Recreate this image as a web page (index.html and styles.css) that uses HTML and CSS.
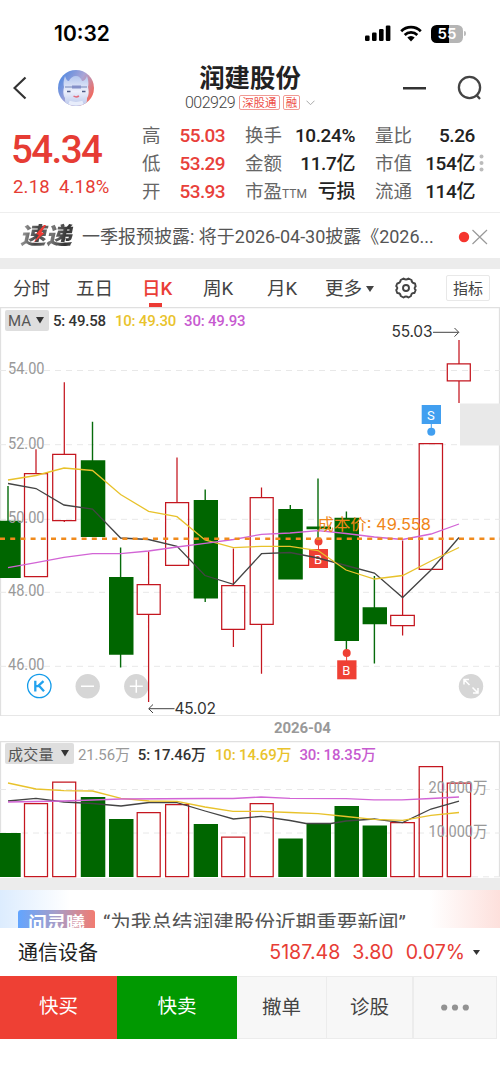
FILE: index.html
```
<!DOCTYPE html>
<html lang="zh-CN">
<head>
<meta charset="utf-8">
<title>润建股份 002929</title>
<link rel="stylesheet" href="styles.css">
</head>
<body>
<main class="app">
  <div class="status">
    <span class="time">10:32</span>
    <svg class="signal" width="26" height="17" viewBox="0 0 26 17"><rect x="0" y="10.5" width="4.6" height="5.5" rx="1.2"/><rect x="7" y="7.5" width="4.6" height="8.5" rx="1.2"/><rect x="14" y="4" width="4.6" height="12" rx="1.2"/><rect x="20.8" y="0.5" width="4.6" height="15.5" rx="1.2"/></svg>
    <svg class="wifi" width="22" height="17" viewBox="0 0 22 17" fill="none" stroke="#000" stroke-width="2.7"><path d="M1.2 6.2a14 14 0 0 1 19.6 0"/><path d="M4.7 10a9 9 0 0 1 12.6 0"/><path d="M7.3 12.6a5.3 5.3 0 0 1 7.4 0L11 16.4z" fill="#000" stroke="none"/></svg>
    <span class="battery"><span class="cell">55</span><i></i></span>
  </div>

  <header class="header">
    <svg class="back" width="14" height="24" viewBox="0 0 14 24" fill="none" stroke="#333" stroke-width="2.2"><path d="M12.5 1.5 1.5 12l11 10.5"/></svg>
    <svg class="avatar" width="38" height="38" viewBox="0 0 38 38">
      <defs>
        <linearGradient id="av" x1="0" y1="0.2" x2="1" y2="0.8"><stop offset="0.1" stop-color="#5d8de0"/><stop offset="0.5" stop-color="#aaa5d6"/><stop offset="0.9" stop-color="#f0695f"/></linearGradient>
        <linearGradient id="face" x1="0" y1="0" x2="0" y2="1"><stop offset="0" stop-color="#b3c6ee"/><stop offset="0.5" stop-color="#eceffb"/><stop offset="1" stop-color="#b5c4ea"/></linearGradient>
        <clipPath id="disc"><circle cx="19" cy="19" r="18"/></clipPath>
      </defs>
      <g clip-path="url(#disc)">
        <rect width="38" height="38" fill="url(#av)"/>
        <path d="M11 38c-3-3-3-6-3-9-2-3-2-7-1-11-1-4 0-8 1-11 1 3 2 5 4 5 1-3 4-5 7-5s5 2 6 5c2 0 4-2 5-5 1 3 2 7 1 11 1 4 1 8-1 11 0 3 0 6-3 9z" fill="url(#face)"/>
        <path d="M8 18h22" stroke="#7485b8" stroke-width="1.200"/>
        <path d="M15 18h9" stroke="#8490c8" stroke-width="3"/>
        <path d="M10 22.500h3.500M25 22.500h3.500" stroke="#4e5b88" stroke-width="1.600"/>
        <path d="M16.500 27q2.700 1.800 5.500 0" stroke="#e26b7c" stroke-width="1.500" fill="none"/>
        <path d="M12 33.500q7 2.500 14 0" stroke="#e8edfb" stroke-width="3.500" fill="none"/>
      </g>
    </svg>
    <div class="stock">
      <h1>润建股份</h1>
      <div class="code"><span class="num">002929</span><b>深股通</b><b>融</b><svg width="9" height="6" viewBox="0 0 9 6" fill="none" stroke="#aaa"><path d="M.5.7l4 4 4-4"/></svg></div>
    </div>
    <svg class="minus" width="23" height="3"><rect width="23" height="2.500" fill="#333"/></svg>
    <svg class="search" width="26" height="26" viewBox="0 0 26 26" fill="none" stroke="#444" stroke-width="2.300"><circle cx="12.500" cy="12.500" r="10.600"/><path d="m19 19.500 4 4.500"/></svg>
  </header>

  <section class="quote">
    <div class="price"><strong>54.34</strong><p><span>2.18</span><span>4.18%</span></p></div>
    <dl>
      <dt>高</dt><dd class="up">55.03</dd><dt>换手</dt><dd>10.24%</dd><dt>量比</dt><dd>5.26</dd>
      <dt>低</dt><dd class="up">53.29</dd><dt>金额</dt><dd>11.7亿</dd><dt>市值</dt><dd>154亿</dd>
      <dt>开</dt><dd class="up">53.93</dd><dt>市盈<small>TTM</small></dt><dd>亏损</dd><dt>流通</dt><dd>114亿</dd>
    </dl>
    <svg class="more" width="5" height="18" fill="#bbb"><circle cx="2.500" cy="2.500" r="2"/><circle cx="2.500" cy="9" r="2"/><circle cx="2.500" cy="15.500" r="2"/></svg>
  </section>

  <section class="news">
    <span class="logo">速递<svg class="bolt" width="10" height="21" viewBox="0 0 10 21"><path d="M7 0 1 10l3 1-4 9 9-11-3-1 3-8z" fill="#f03a33"/></svg></span>
    <span class="headline">一季报预披露: 将于<span class="d">2026-04-30</span>披露《<span class="d">2026...</span></span>
    <svg width="30" height="18" viewBox="0 0 30 18"><circle cx="6" cy="9" r="5.200" fill="#f5352e"/><path d="M14.500 2 29 16M29 2 14.500 16" stroke="#999" stroke-width="1.200"/></svg>
  </section>

  <nav class="tabs">
    <span>分时</span><span>五日</span><span class="on">日K</span><span>周K</span><span>月K</span>
    <span class="drop">更多<svg width="8" height="6"><path d="M0 0h8L4 6z" fill="#444"/></svg></span>
    <svg class="gear" width="22" height="22" viewBox="0 0 22 22" fill="none" stroke="#444" stroke-width="1.900" stroke-linejoin="round"><path d="M8.500 1.500Q11 3.500 13.500 1.500L16.500 3Q16.500 6 20 6.500L20.700 9.500Q18.500 11 20.700 13L19.500 16Q16.300 15.500 16 19L13.500 20.500Q11 18.500 8.500 20.500L5.700 19Q5.500 15.800 2.200 16L1.200 13Q3.500 11 1.200 9.200L2.200 6.500Q5.500 6.200 5.700 3Z"/><circle cx="11" cy="11" r="3"/></svg>
    <button>指标</button>
  </nav>

  <section class="panel kline">
    <svg width="500" height="409" viewBox="0 307 500 409">
      <path class="frame" d="M0 307.700H500M.5 308V716M499.500 308V716M0 715.800H500"/>
      <rect x="460" y="403.500" width="40" height="42" fill="#e9e9e9"/>
      <path class="grid" d="M0 370.500H500M0 444.700H460M0 519.300H500M0 592.300H500M0 666.300H500"/>
      <g class="axis">
        <text x="8" y="374.300" textLength="36.500" lengthAdjust="spacingAndGlyphs">54.00</text><text x="8" y="448.600" textLength="36.500" lengthAdjust="spacingAndGlyphs">52.00</text><text x="8" y="596" textLength="36.500" lengthAdjust="spacingAndGlyphs">48.00</text><text x="8" y="670" textLength="36.500" lengthAdjust="spacingAndGlyphs">46.00</text>
      </g>
      <g class="round"><circle cx="87.700" cy="686.300" r="12.200"/><circle cx="136.300" cy="686.300" r="12.200"/><circle cx="471" cy="686.300" r="12.200"/></g>
      <path d="M81 686.300h13M129.800 686.300h13M136.300 679.800v13M464 684.500v-5h5M464.500 680l5 5M478 688v5h-5M477.500 692.500l-5-5" fill="none" stroke="#fff" stroke-width="1.500"/>
      <circle cx="39.300" cy="686" r="11.700" fill="#fff" stroke="#139bea" stroke-width="1.300"/>
      <path d="M35.300 680.800v10.700M43.500 681.200l-5.500 5h-2.500M39 685.700l5 5.600" stroke="#22a2ee" stroke-width="2.300" fill="none"/>
      <g class="green">
        <path d="M8 486v40M92.500 421.700V465M120.600 547.500v120M205.200 489.500V602M290.300 505v10M318 478.500v62M346.400 511.500V652M374.400 576v87.500"/>
        <path class="body" d="M0 520.700H20.700V578H0zM80.800 460.300h24.500V537H80.800zM109 577h24.500v77.800H109zM193.700 500H218v98.500h-24.300zM278.300 509h24.500v70.500h-24.500zM306.500 526.500H331v2.700h-24.500zM334.500 517.700H359V641h-24.500zM362.600 607.300H387V624.300h-24.400z"/>
      </g>
      <path class="red" d="M36 449.300v24M24.500 473.500h23v103h-23zM64.300 382.300V454M52.700 454.300h23v66.200h-23zM64.300 520.500v1.500M148.600 551.500v33M137.200 584.700h23v29.600h-23zM148.600 614.300V702M177 457.500v45M165.600 502.700h23v62.600h-23zM233.400 548.500v37M221.700 585.700h23v43.600h-23zM233.400 629.300v17.700M261.500 487.500v10M250.200 497.500h23v126.800h-23zM261.500 624.300v49.400M402.600 540.500v74.700M390.700 615.300h23.600v10.300h-23.600zM402.600 625.600v10M419.200 443.600h23.300v125.700h-23.300zM459 340v23.700M447.300 363.900h23v17h-23zM459 381v22"/>
      <text class="axis" x="8" y="522.600" textLength="36.500" lengthAdjust="spacingAndGlyphs">50.00</text>
      <g class="trade"><path d="M318.500 541v9M346.600 652v9"/><circle cx="318.500" cy="541.500" r="4"/><circle cx="346.700" cy="653" r="4"/><rect x="309" y="549" width="19" height="19"/><rect x="337.200" y="660.300" width="19.300" height="19"/><text x="314" y="563.500">B</text><text x="342.200" y="674.800">B</text></g>
      <polyline class="ma5" points="8,483.500 36,488.500 64,505 92.500,509 120.600,538 148.600,539.500 177,546.300 205,575.500 233.400,584.300 261.500,553.700 290,552.500 318,558 346,565.500 374.400,573 402.600,597.500 431,570 459,537.500"/>
      <g class="trade sell"><path d="M431.300 422v9"/><circle cx="431.300" cy="431.700" r="4"/><rect x="421.700" y="405" width="19.300" height="19"/><text x="427" y="419.500">S</text></g>
      <polyline class="ma10" points="8,480 36,475.500 64,468 92.500,470.500 120.600,494.500 148.600,511.300 177,516.700 205,540 233.400,547.700 261.500,546.300 290,546.300 318,550.500 346,570 374.400,579 402.600,575.500 431,561 459,547.500"/>
      <polyline class="ma30" points="8,567.700 36,562.700 64,557.300 92.500,553.700 120.600,553.700 148.600,551 177,547 205,543.300 233.400,539.500 261.500,534.300 290,533 318,530.700 346,533.500 374.400,537 402.600,539.500 431,534 459,524"/>
      <path class="cost" d="M0 538.700H500"/>
      <text class="costlabel" x="317.500" y="530.300" textLength="113.500" lengthAdjust="spacingAndGlyphs">成本价: 49.558</text>
      <g class="peak"><text x="391.500" y="337" textLength="41">55.03</text><text x="174.500" y="713.500" textLength="41.500">45.02</text></g>
      <path d="M433 332.300h25.500M454.500 328l4.300 4.300-4.300 4.300M174.500 708.700H149M153 704.500l-4.300 4.200 4.300 4.300" fill="none" stroke="#444"/>
    </svg>
    <div class="legend"><span class="pick" style="width:44px"><i>MA</i><svg width="8" height="7"><path d="M0 0h8L4 6.500z" fill="#333"/></svg></span><span class="l5">5: 49.58</span><span class="l10">10: 49.30</span><span class="l30">30: 49.93</span></div>
  </section>
  <div class="date">2026-04</div>
  <section class="panel volume">
    <svg width="500" height="137" viewBox="0 741 500 137">
      <path class="frame" d="M0 741.700H500M.5 742V877M499.500 742V877"/>
      <path class="grid" d="M0 789.500H500M0 833H500M472 876.800H500"/>
      <path class="body" fill="#006600" d="M0 833H20.700V877H0zM80.800 797h24.500v80H80.800zM109 819h24.500v58H109zM193.700 824H218v53h-24.300zM278.300 838.500h24.500V877h-24.500zM306.500 823H331v54h-24.500zM334.500 806H359v71h-24.500zM362.600 825.500H387V877h-24.400z"/>
      <path class="red" d="M24.500 803.500h23v73h-23zM52.700 782h23v94.500h-23zM137.200 812.700h23v63.800h-23zM165.600 804.700h23v71.800h-23zM221.700 837h23v39.500h-23zM250.200 803.700h23v72.800h-23zM390.700 822.700h23.600v53.800h-23.600zM419.200 766.500h23.300v110h-23.300zM447.300 783h23.300v93.500h-23.300z"/>
      <polyline class="ma5" points="8,801 36,798.300 64,802 92.500,803.500 121,806 149,802.500 177,802.700 205,811 233.400,819 261.500,816.300 290,820.500 306,823.500 331,823.500 346,821 374,819 402.600,822.700 431,809 459,801"/>
      <polyline class="ma10" points="8,783 36,789 64,790.700 92.500,791 121,798.300 149,801 177,801.300 205,807 233,811.300 261,811.300 290,812.500 318,813.700 346,816.500 374,819.300 402.600,820.300 431,815.300 459,812.500"/>
      <polyline class="ma30" points="8,802 64,801 92.500,800 121,799 205,798.500 233,798.500 261,797 290,798.300 346,798.700 374,799.800 402,799.800 431,798.500 459,797"/>
      <g class="axis"><text x="428.500" y="793" textLength="59" lengthAdjust="spacingAndGlyphs">20.000万</text><text x="428.500" y="836.500" textLength="59" lengthAdjust="spacingAndGlyphs">10.000万</text></g>
    </svg>
    <div class="legend"><span class="pick" style="width:69px"><i>成交量</i><svg width="8" height="7"><path d="M0 0h8L4 6.500z" fill="#333"/></svg></span><span class="cur">21.56万</span><span class="l5">5: 17.46万</span><span class="l10">10: 14.69万</span><span class="l30">30: 18.35万</span></div>
  </section>

  <section class="ask"><b>问灵曦</b><span>“为我总结润建股份近期重要新闻”</span></section>
  <section class="sector"><span>通信设备</span><span class="figs"><span>5187.48</span><span>3.80</span><span>0.07%</span></span><svg width="7" height="6"><path d="M0 1h7L3.500 6z" fill="#333"/></svg></section>
  <footer class="actions"><span class="buy">快买</span><span class="sellbtn">快卖</span><span>撤单</span><span>诊股</span><span class="dots"><svg width="28" height="7" fill="#929292"><circle cx="3.200" cy="3.500" r="3.100"/><circle cx="14" cy="3.500" r="3.100"/><circle cx="24.800" cy="3.500" r="3.100"/></svg></span></footer>
</main>
</body>
</html>
```
FILE: styles.css
```
* { box-sizing: border-box; }
body { margin: 0; background: #fff; color: #444; font-family: Roboto, "Noto Sans CJK SC", sans-serif; }
.app { width: 500px; height: 1083px; overflow: hidden; display: flex; flex-direction: column; }
.app > * { flex: none; }
svg { display: block; flex: none; }
h1, p, dl, dd { margin: 0; }
i { font-style: normal; }

.status { height: 60px; padding: 7px 34px 0 54px; display: flex; align-items: center; color: #000; }
.time { font: 600 21px/24px Inter, sans-serif; margin-right: auto; }
.signal { margin-right: 9px; }
.wifi { margin-right: 9px; }
.battery { display: flex; align-items: center; }
.cell { width: 32px; height: 18px; border-radius: 5.5px; background: linear-gradient(90deg, #000 55%, #b5b5b5 55%); color: #fff; font: 600 15px/18px Inter, sans-serif; text-align: center; }
.battery i { width: 2px; height: 5px; margin-left: 1px; border-radius: 0 2px 2px 0; background: #bbb; }

.header { height: 60px; display: flex; align-items: center; padding: 0 17px 4px 13px; }
.avatar { margin-left: 30px; }
.stock { width: 130px; margin-left: 90px; padding-bottom: 3px; text-align: center; display: flex; flex-direction: column; align-items: center; }
h1 { font: 700 25.4px/32px "Noto Sans CJK SC", sans-serif; color: #222; white-space: nowrap; margin-top: -1px; }
.code { height: 19px; margin-top: 1px; display: flex; align-items: center; gap: 4px; white-space: nowrap; }
.num { font-size: 16px; font-weight: 300; color: #444; letter-spacing: -.5px; }
.code b { height: 15px; padding: 0 2px; border: 1px solid #f09a94; border-radius: 2px; font: 400 11.5px/13px "Noto Sans CJK SC", sans-serif; color: #ee5047; }
.code b + b { margin-left: -1px; }
.code svg { margin-left: 2px; }
.minus { margin-left: 88px; }
.search { margin-left: auto; }

.quote { height: 93px; display: flex; align-items: flex-start; border-bottom: 1px solid #eee; padding-left: 12px; }
.price { width: 130px; color: #e63c34; }
.price strong { display: block; margin-left: -1px; padding-top: 7px; font-size: 38.5px; line-height: 46px; font-weight: 500; letter-spacing: -1.6px; }
.price p { display: flex; gap: 9px; padding: 3px 0 0 1px; font-size: 18.5px; line-height: 22px; letter-spacing: .2px; }
dl { display: grid; grid-template-columns: 37px 46px 65px 65px 58px 62px; grid-auto-rows: 28px; padding-top: 2px; line-height: 28px; }
dl dt:nth-of-type(3n+2), dl dt:nth-of-type(3n) { padding-left: 20px; }
dt { font-size: 18.500px; color: #666; white-space: nowrap; }
dt small { font-size: 12px; }
dd { font-size: 19px; font-weight: 500; color: #222; text-align: right; letter-spacing: -.4px; white-space: nowrap; }
dd.up { color: #e8403a; letter-spacing: -.6px; }
.more { margin: 34px 0 0 4px; }

.news { height: 45px; display: flex; align-items: center; padding: 2px 12px 0 22px; }
.logo { position: relative; width: 60px; height: 27px; margin-top: -4px; font: 900 26px/25px "Noto Sans CJK SC", sans-serif; transform: skewX(-12deg) scaleY(.9); background: linear-gradient(90deg, #999, #444 25%, #777 50%, #333 75%, #666); -webkit-background-clip: text; color: transparent; white-space: nowrap; }
.bolt { position: absolute; left: 13px; top: 3px; }
.headline { flex: 1; font-size: 18px; line-height: 26px; white-space: nowrap; color: #555; }
.d { letter-spacing: -.05px; }

.tabs { height: 49px; border-top: 11px solid #ececec; padding-left: 13px; display: grid; grid-template-columns: 63px 66px 61px 64px 58px 70px 51px 44px; align-items: center; font-size: 18.600px; line-height: 38px; }
.tabs > span { padding-top: 1px; height: 38px; }
.tabs .on { position: relative; color: #ea3e37; font-weight: 500; }
.tabs .on::after { content: ""; position: absolute; left: 7px; bottom: 0; width: 13px; height: 4px; background: #ec3a34; }
.drop { display: flex; align-items: center; gap: 4px; }
.tabs button { height: 26px; border: 1px solid #e8e8e8; border-radius: 2px; padding: 0; background: #fff; font: 400 15px/22px "Noto Sans CJK SC", sans-serif; color: #444; }

.panel { display: grid; align-items: start; }
.panel > * { grid-area: 1 / 1; }
.kline { height: 409px; }
.volume { height: 137px; }
.legend { display: flex; align-items: center; height: 21px; margin: 3px 0 0 5px; font-size: 15px; letter-spacing: -.2px; white-space: nowrap; z-index: 1; }
.pick { display: flex; align-items: center; justify-content: space-between; height: 21px; padding: 0 5px 0 3px; background: #dedede; border-radius: 2px; color: #555; margin-right: 4px; letter-spacing: 0; }
.volume .legend { margin-top: 2px; letter-spacing: -.15px; }
.volume .pick { letter-spacing: .3px; }
.cur { color: #999; margin-right: 8px; }
.l5 { color: #333; margin-right: 9px; font-weight: 500; }
.l10 { color: #e9c32c; margin-right: 8px; font-weight: 500; }
.l30 { color: #c75bd0; font-weight: 500; }
.frame { stroke: #e0e0e0; stroke-width: 1.300; fill: none; }
.grid { stroke: #e8e8e8; stroke-width: 1; stroke-dasharray: 6 5; fill: none; }
.axis { font-size: 16px; fill: #999; }
.round { fill: #d6d6d6; }
.green { stroke: #066b0b; stroke-width: 1.400; fill: none; }
.green .body { fill: #006600; stroke: none; }
.red { stroke: #c4161f; stroke-width: 1.250; fill: none; }
.ma5, .ma10, .ma30 { fill: none; stroke-width: 1.300; }
.ma5 { stroke: #444; }
.ma10 { stroke: #e8c22b; }
.ma30 { stroke: #d264d5; }
.cost { stroke: #f08a1c; stroke-width: 2.500; stroke-dasharray: 5 5.200; }
.costlabel { font: 15.500px Inter, "Noto Sans CJK SC", sans-serif; fill: #f0861a; }
.peak { font: 15.500px Inter, sans-serif; fill: #333; }
.trade { fill: #ef4034; stroke: #ef4034; }
.trade rect, .trade circle { stroke: none; }
.trade text { fill: #fff; stroke: none; font-size: 13px; }
.trade.sell { fill: #419ff0; stroke: #419ff0; }
.date { height: 25px; padding: 0 0 0 274px; font-size: 15px; line-height: 24px; font-weight: 700; color: #999; letter-spacing: -.1px; }

.ask { height: 50px; border-top: 12px solid #ececec; overflow: hidden; display: flex; align-items: flex-start; padding-left: 18px; background: linear-gradient(90deg, #dcecfe, #fff 70px, #fff 430px, #fde0dc); background-clip: padding-box; }
.ask b { width: 77px; height: 26px; margin-top: 20px; border-radius: 3px; background: linear-gradient(90deg, #62a5ff, #a79dc8 50%, #f27b70); color: #fff; text-align: center; font: 700 19px/25px "Noto Sans CJK SC", sans-serif; }
.ask span { margin: 18px 0 0 8px; font-size: 20.600px; line-height: 30px; color: #555; white-space: nowrap; }
.sector { height: 48px; display: flex; align-items: center; padding: 0 20px 1px 18px; font-size: 20px; color: #222; }
.figs { display: flex; gap: 12px; margin: 0 8px 0 auto; color: #e73d36; font: 400 19.600px/24px Inter, sans-serif; }
.actions { display: grid; grid-template-columns: 117px 120px 90px 86px 84px; height: 62px; font-size: 19.500px; line-height: 61px; text-align: center; }
.actions span { background: #f7f7f7; border: solid #ececec; border-width: 1px 1px 1px 0; }
.actions .buy { background: #ee4034; color: #fff; border: 0; }
.actions .sellbtn { background: #019901; color: #fff; border: 0; }
.actions .dots { display: flex; align-items: center; justify-content: center; border-left-width: 1px; }
```
